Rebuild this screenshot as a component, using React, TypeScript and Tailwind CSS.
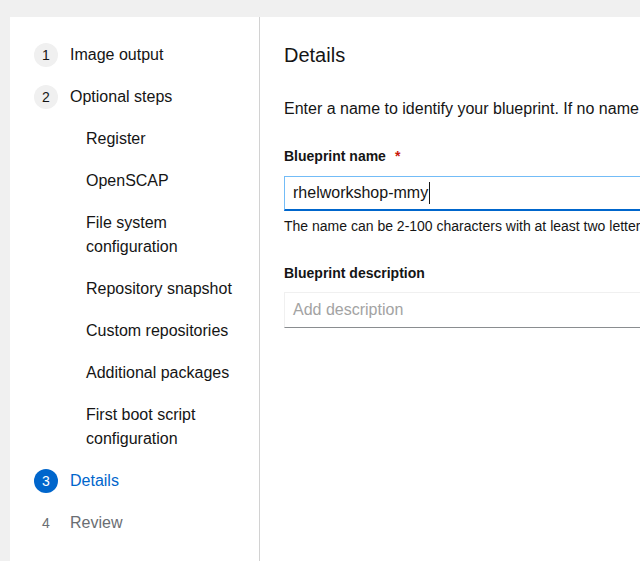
import React from 'react';

type Step = {
  num?: number;
  label: string;
  sub?: boolean;
  current?: boolean;
  disabled?: boolean;
};

const steps: Step[] = [
  { num: 1, label: 'Image output' },
  { num: 2, label: 'Optional steps' },
  { label: 'Register', sub: true },
  { label: 'OpenSCAP', sub: true },
  { label: 'File system configuration', sub: true },
  { label: 'Repository snapshot', sub: true },
  { label: 'Custom repositories', sub: true },
  { label: 'Additional packages', sub: true },
  { label: 'First boot script configuration', sub: true },
  { num: 3, label: 'Details', current: true },
  { num: 4, label: 'Review', disabled: true },
];

const StepNav: React.FC = () => (
  <nav className="w-[250px] shrink-0 border-r border-[#d2d2d2] pt-[26px]">
    <ul className="flex flex-col gap-[18px]">
      {steps.map((s) =>
        s.sub ? (
          <li key={s.label} className="pl-[76px] pr-6 text-base leading-6 text-[#151515]">
            {s.label}
          </li>
        ) : (
          <li key={s.label} className="flex items-center pl-6 leading-6">
            <span
              className={
                s.current
                  ? 'flex h-6 w-6 items-center justify-center rounded-full bg-[#0066cc] text-sm text-white'
                  : s.disabled
                  ? 'flex h-6 w-6 items-center justify-center rounded-full text-sm text-[#6a6e73]'
                  : 'flex h-6 w-6 items-center justify-center rounded-full bg-[#f0f0f0] text-sm text-[#151515]'
              }
            >
              {s.num}
            </span>
            <span
              className={
                s.current
                  ? 'ml-3 text-base text-[#0066cc]'
                  : s.disabled
                  ? 'ml-3 text-base text-[#6a6e73]'
                  : 'ml-3 text-base text-[#151515]'
              }
            >
              {s.label}
            </span>
          </li>
        )
      )}
    </ul>
  </nav>
);

const App: React.FC = () => {
  return (
    <div
      className="h-[561px] overflow-hidden bg-[#f0f0f0] pl-[10px] pt-[17px]"
      style={{ fontFamily: '"Liberation Sans", Arial, sans-serif' }}
    >
      <div className="flex h-[700px] w-[1100px] bg-white">
        <StepNav />
        <main className="min-w-0 flex-1 px-6 pt-[15px] text-[#151515]">
          <h1 className="text-[20px] font-medium leading-[46px]">Details</h1>
          <p className="mt-[19px] whitespace-nowrap text-base leading-6">
            Enter a name to identify your blueprint. If no name is entered, the images created from this blueprint will use the name of the parent blueprint.
          </p>

          <div className="mt-[25px]">
            <label className="flex items-center text-sm font-bold leading-5">
              Blueprint name
              <span className="ml-[9px] text-[#c9190b]">*</span>
            </label>
            <div className="mt-[10px] flex h-[35px] items-center border border-[#73bcf7] border-b-2 border-b-[#0066cc] px-2">
              <span className="text-base leading-6">rhelworkshop-mmy</span>
              <span className="ml-[1px] inline-block h-[22px] w-px bg-[#151515]"></span>
            </div>
            <p className="mt-[5px] whitespace-nowrap text-sm leading-5 text-[#151515]">
              The name can be 2-100 characters with at least two letters or numbers
            </p>
          </div>

          <div className="mt-[27px]">
            <label className="block text-sm font-bold leading-5">Blueprint description</label>
            <div className="mt-[9px] flex h-[36px] items-center border border-[#f0f0f0] border-b-[#8a8d90] px-2">
              <span className="text-base leading-6 text-[#a3a3a3]">Add description</span>
            </div>
          </div>
        </main>
      </div>
    </div>
  );
};

export default App;
